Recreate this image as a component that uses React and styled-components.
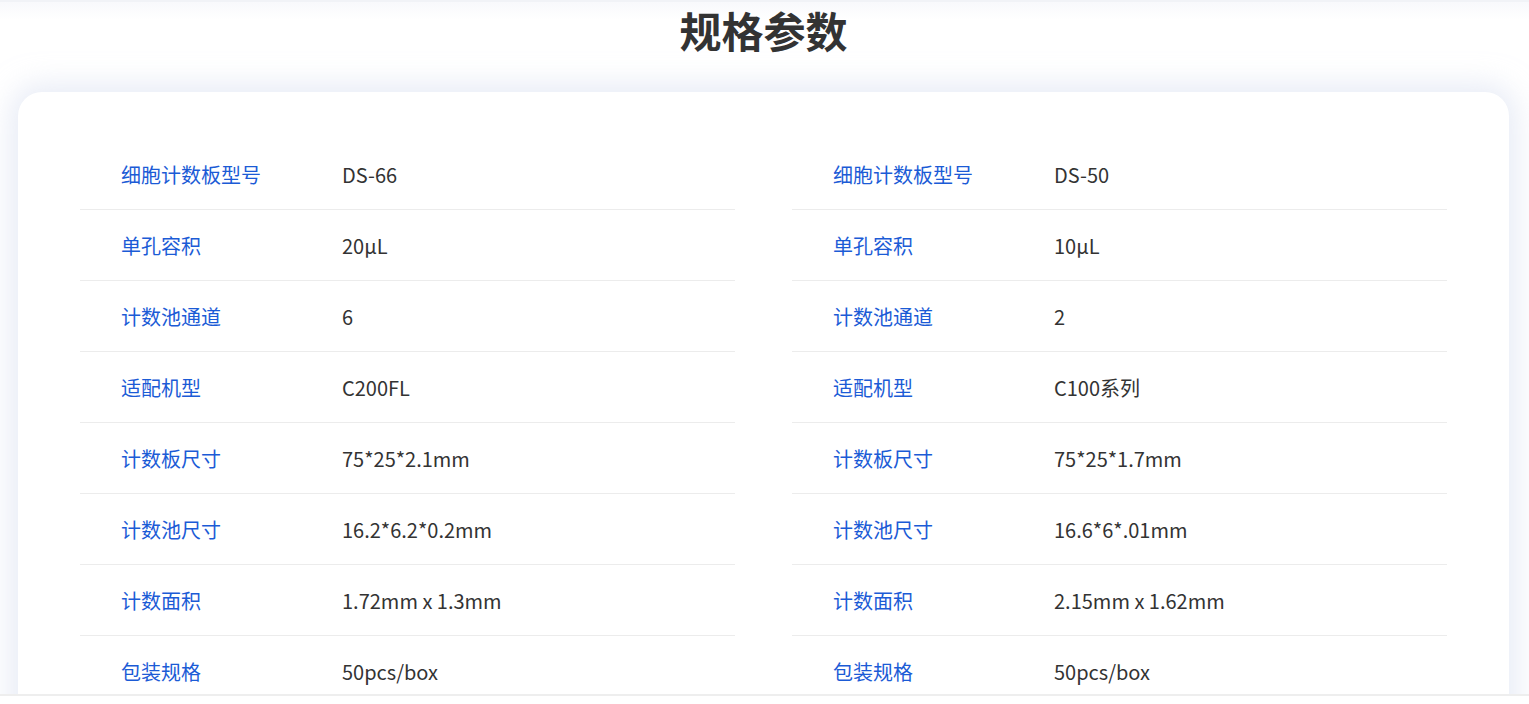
import React from "react";
import styled, { createGlobalStyle } from "styled-components";

const Global = createGlobalStyle`
  html, body {
    margin: 0;
    padding: 0;
    background: #fff;
  }
  body {
    font-family: "Noto Sans CJK SC", "Noto Sans", sans-serif;
    color: #333;
  }
`;

const left = [
  ["细胞计数板型号", "DS-66"],
  ["单孔容积", "20μL"],
  ["计数池通道", "6"],
  ["适配机型", "C200FL"],
  ["计数板尺寸", "75*25*2.1mm"],
  ["计数池尺寸", "16.2*6.2*0.2mm"],
  ["计数面积", "1.72mm x 1.3mm"],
  ["包装规格", "50pcs/box"],
];

const right = [
  ["细胞计数板型号", "DS-50"],
  ["单孔容积", "10μL"],
  ["计数池通道", "2"],
  ["适配机型", "C100系列"],
  ["计数板尺寸", "75*25*1.7mm"],
  ["计数池尺寸", "16.6*6*.01mm"],
  ["计数面积", "2.15mm x 1.62mm"],
  ["包装规格", "50pcs/box"],
];

const Section = styled.section`
  height: 694px;
  overflow: hidden;
  border-top: 2px solid #f1f3f7;
  background: linear-gradient(#f8f9fc, #fff 18px);
  padding: 0 20px 0 18px;
  box-sizing: border-box;
`;

const Title = styled.h2`
  margin: 6px 0 40px;
  text-align: center;
  font-size: 42px;
  line-height: 44px;
  font-weight: 700;
  color: #333;
  letter-spacing: 0;
`;

const Card = styled.div`
  background: #fff;
  border-radius: 24px;
  box-shadow: 0 0 28px 8px rgba(214, 221, 238, 0.55);
  padding: 47px 62px 60px;
  display: grid;
  grid-template-columns: 1fr 1fr;
  column-gap: 57px;
`;

const Table = styled.div`
  display: flex;
  flex-direction: column;
`;

const Row = styled.div`
  display: flex;
  align-items: center;
  height: 70px;
  border-bottom: 1px solid #ececec;
  font-size: 20px;
`;

const Label = styled.span`
  width: 221px;
  padding-left: 41px;
  color: #1b5bd6;
`;

const Value = styled.span`
  color: #333;
`;

const Bottom = styled.div`
  height: 2px;
  background: #eeeeee;
`;

const SpecTable = ({ rows }) => (
  <Table>
    {rows.map(([k, v]) => (
      <Row key={k}>
        <Label>{k}</Label>
        <Value>{v}</Value>
      </Row>
    ))}
  </Table>
);

const App = () => (
  <>
    <Global />
    <Section>
      <Title>规格参数</Title>
      <Card>
        <SpecTable rows={left} />
        <SpecTable rows={right} />
      </Card>
    </Section>
    <Bottom />
  </>
);

export default App;
